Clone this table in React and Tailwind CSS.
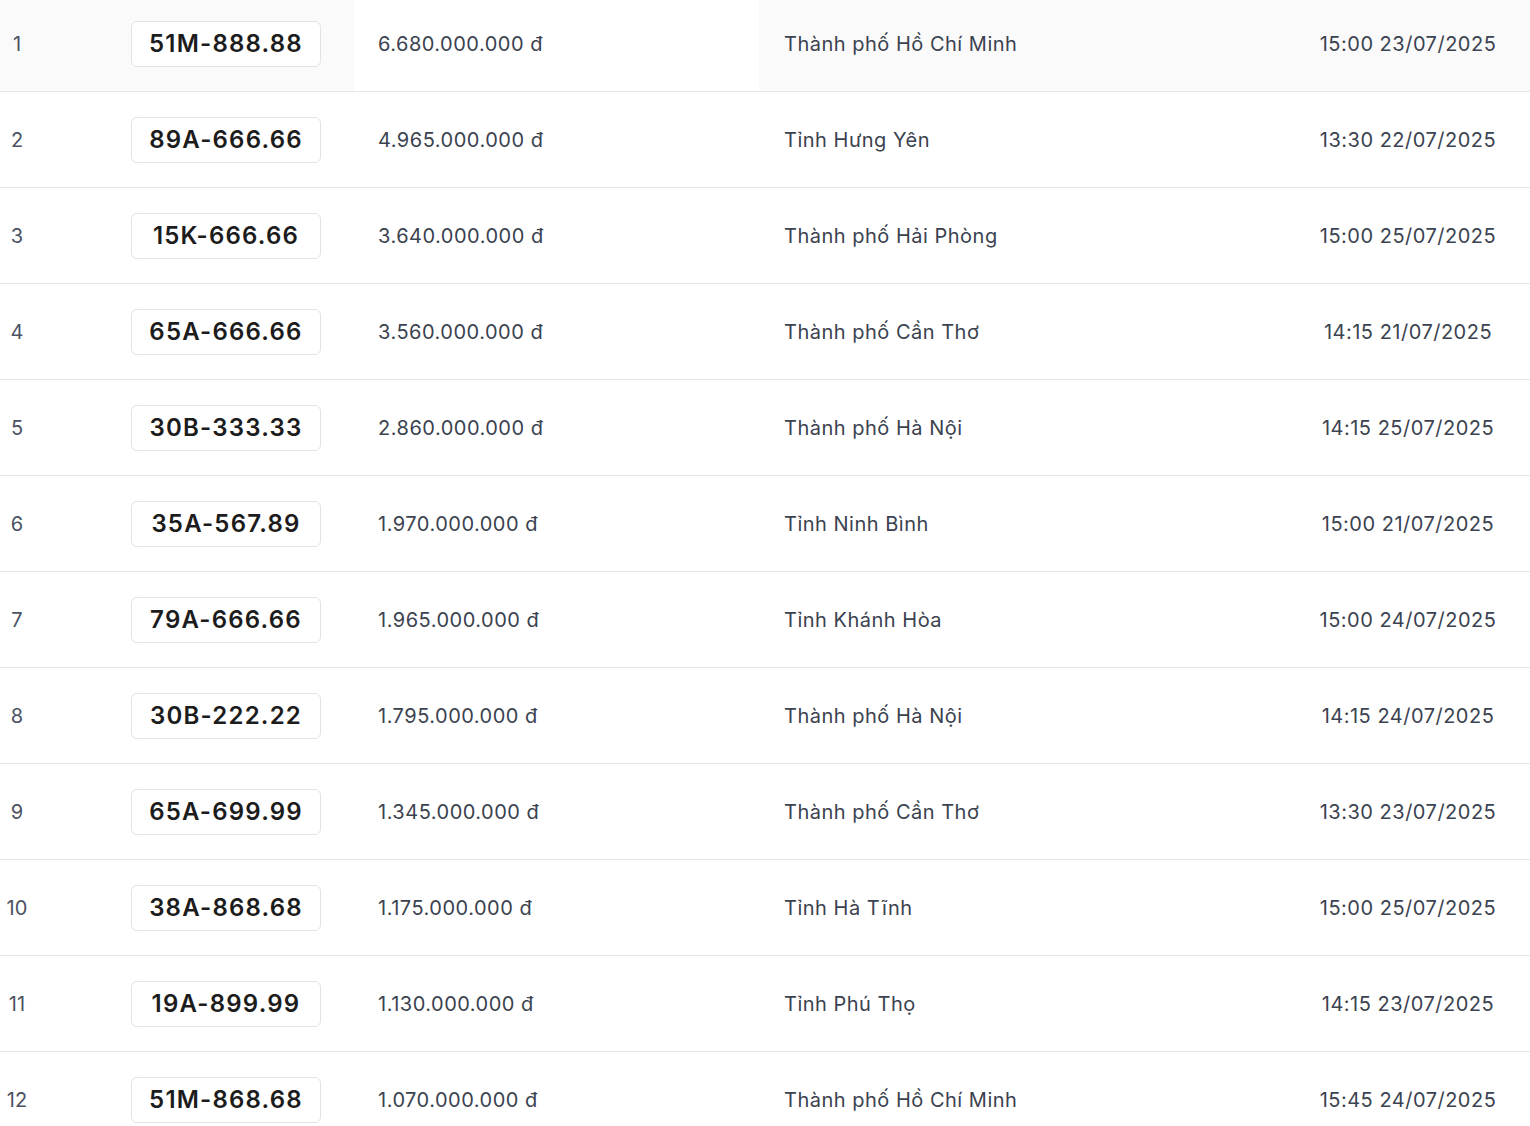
import React from "react";

const rows = [
  ["1", "51M-888.88", "6.680.000.000 đ", "Thành phố Hồ Chí Minh", "15:00 23/07/2025"],
  ["2", "89A-666.66", "4.965.000.000 đ", "Tỉnh Hưng Yên", "13:30 22/07/2025"],
  ["3", "15K-666.66", "3.640.000.000 đ", "Thành phố Hải Phòng", "15:00 25/07/2025"],
  ["4", "65A-666.66", "3.560.000.000 đ", "Thành phố Cần Thơ", "14:15 21/07/2025"],
  ["5", "30B-333.33", "2.860.000.000 đ", "Thành phố Hà Nội", "14:15 25/07/2025"],
  ["6", "35A-567.89", "1.970.000.000 đ", "Tỉnh Ninh Bình", "15:00 21/07/2025"],
  ["7", "79A-666.66", "1.965.000.000 đ", "Tỉnh Khánh Hòa", "15:00 24/07/2025"],
  ["8", "30B-222.22", "1.795.000.000 đ", "Thành phố Hà Nội", "14:15 24/07/2025"],
  ["9", "65A-699.99", "1.345.000.000 đ", "Thành phố Cần Thơ", "13:30 23/07/2025"],
  ["10", "38A-868.68", "1.175.000.000 đ", "Tỉnh Hà Tĩnh", "15:00 25/07/2025"],
  ["11", "19A-899.99", "1.130.000.000 đ", "Tỉnh Phú Thọ", "14:15 23/07/2025"],
  ["12", "51M-868.68", "1.070.000.000 đ", "Thành phố Hồ Chí Minh", "15:45 24/07/2025"],
];

function Plate({ text }) {
  return (
    <div className="flex h-[46px] w-[190px] items-center justify-center rounded-md border border-[#e3e3e3] bg-white text-[24px] font-semibold tracking-[1.2px] text-[#1c1c1c]">
      {text}
    </div>
  );
}

export default function App() {
  return (
    <div
      className="mt-[-4px] w-[1530px] bg-white text-[20px] tracking-[0.5px] text-[#3b4250]"
      style={{ fontFamily: "Inter, 'Noto Sans', sans-serif" }}
    >
      {rows.map((r, i) => {
        const hl = i === 0;
        return (
          <div key={r[0]} className="flex h-[96px] border-b border-[#e6e6e6]">
            <div className={`flex w-[354px] items-center ${hl ? "bg-[#fafafa]" : ""}`}>
              <div className="w-[34px] text-center tracking-normal text-[#4b5262]">{r[0]}</div>
              <div className="flex w-[320px] justify-center pl-[64px]">
                <Plate text={r[1]} />
              </div>
            </div>
            <div className="flex w-[405px] items-center pl-[24px]">{r[2]}</div>
            <div className={`flex flex-1 items-center ${hl ? "bg-[#fafafa]" : ""}`}>
              <div className="flex-1 pl-[25px]">{r[3]}</div>
              <div className="w-[244px] text-center">{r[4]}</div>
            </div>
          </div>
        );
      })}
    </div>
  );
}
